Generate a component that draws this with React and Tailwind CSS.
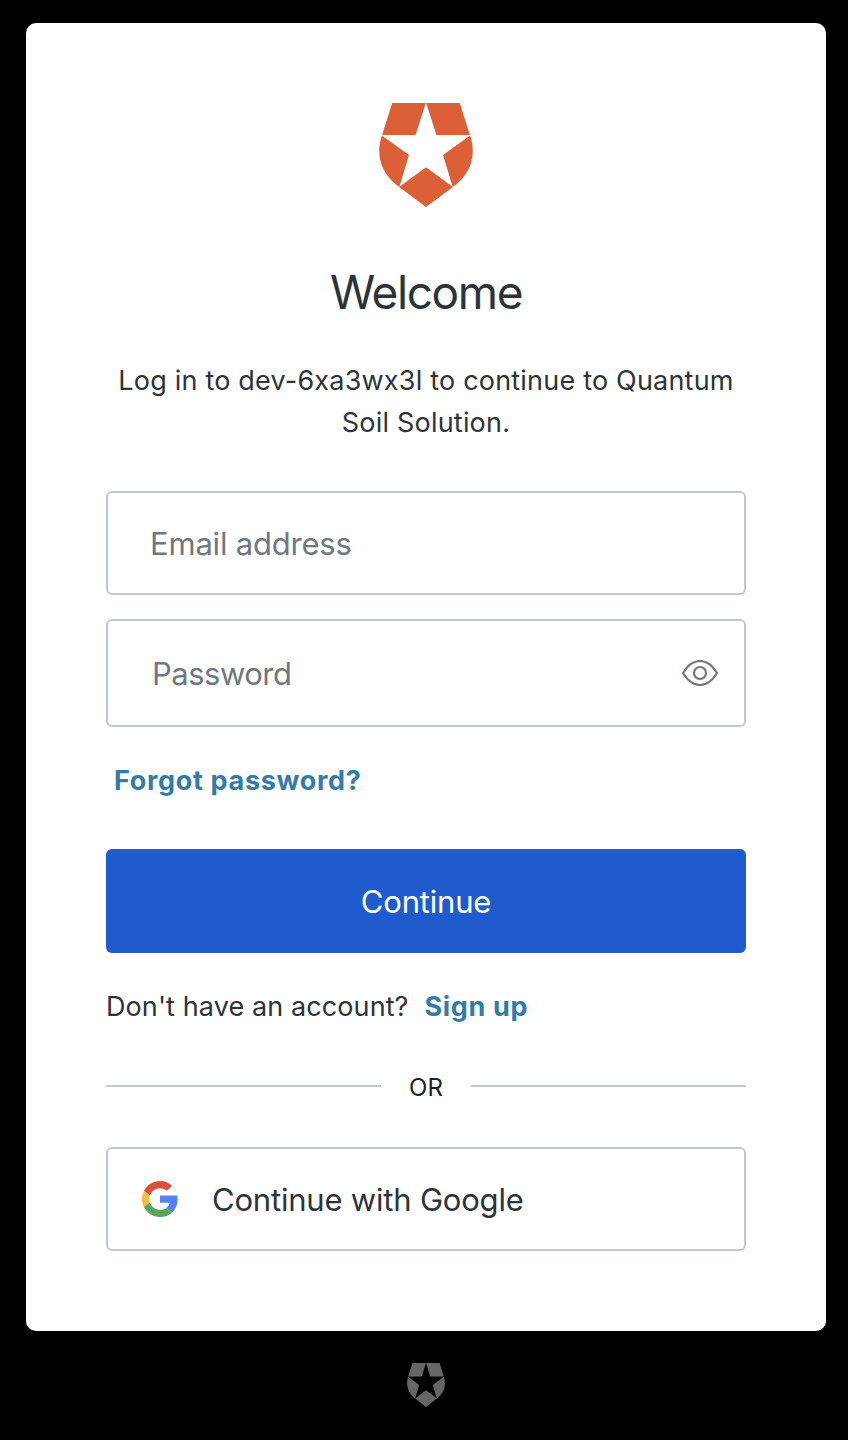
function Shield({ className }) {
  return (
    <svg viewBox="0 0 94 104" preserveAspectRatio="none" className={className} fill="currentColor" aria-hidden="true">
      <path d="M13.2 0H46.8L36.6 32.1H3.1Z" />
      <path d="M47.2 0H80.8L90.9 32.1H57.4Z" />
      <path d="M2.8 32.6L30 52L20.3 84C4.500 73-4.500 55 2.8 32.6Z" />
      <path d="M91.2 32.6L64 52L73.7 84C89.500 73 98.500 55 91.2 32.6Z" />
      <path d="M47 64.200L73.900 83.900L47 104L20.100 83.900Z" />
    </svg>
  );
}

function Eye() {
  return (
    <svg viewBox="0 0 36 26" className="h-[26px] w-9" fill="none" stroke="#6f7780" strokeWidth="2.2" strokeLinejoin="round" aria-hidden="true">
      <path d="M1 13C5.5 5.500 11.500 1 18 1S30.500 5.500 35 13C30.500 20.500 24.500 25 18 25S5.500 20.500 1 13Z" />
      <circle cx="18" cy="13" r="6" />
    </svg>
  );
}

function Google() {
  return (
    <svg viewBox="0 0 48 48" className="h-9 w-9" aria-hidden="true">
      <path fill="#d95040" d="M24 9.500c3.540 0 6.710 1.220 9.210 3.600l6.850-6.850C35.900 2.380 30.470 0 24 0 14.620 0 6.510 5.380 2.560 13.220l7.980 6.190C12.430 13.720 17.740 9.500 24 9.500z" />
      <path fill="#5383ec" d="M47.500 24.550c0-1.900-.15-3.400-.4-5.200H24v9.670h12.940c-.58 2.960-2.260 5.480-4.780 7.180l7.730 6c4.510-4.180 7.610-10.360 7.610-17.650z" />
      <path fill="#f2bd42" d="M10.530 28.590c-.48-1.450-.76-2.990-.76-4.590s.27-3.140.76-4.590l-7.980-6.190C.92 16.460 0 20.120 0 24c0 3.880.92 7.540 2.560 10.780l7.970-6.190z" />
      <path fill="#58a55c" d="M24 48c6.480 0 11.930-2.130 15.890-5.810l-7.730-6c-2.150 1.450-4.920 2.300-8.160 2.300-6.260 0-11.570-4.220-13.470-9.910l-7.980 6.190C6.510 42.620 14.620 48 24 48z" />
    </svg>
  );
}

export default function App() {
  return (
    <div className="flex h-[1440px] w-[848px] flex-col items-center bg-black pt-[23px] pl-1 font-['Inter','Liberation_Sans',sans-serif] text-[#2d333a]">
      <main className="flex h-[1308px] w-[800px] flex-col rounded-[10px] bg-white px-20 pt-20">
        <Shield className="h-[104px] w-[94px] self-center text-[#dc5f38]" />
        <h1 className="mt-[57px] text-center text-[46px] leading-[56px] tracking-[-1.4px]">Welcome</h1>
        <p className="mt-10 text-center text-[27px] leading-[42px] tracking-[0.2px]">
          Log in to dev-6xa3wx3l to continue to Quantum
          <br />
          Soil Solution.
        </p>

        <form className="mt-[47px] flex flex-col">
          <input
            type="text"
            placeholder="Email address"
            className="h-[104px] rounded-md border-2 border-[#c2c8d0] px-[42px] text-[31px] tracking-[-0.2px] placeholder:text-[#6f7780]"
          />
          <div className="mt-6 flex h-[108px] items-center rounded-md border-2 border-[#c2c8d0] pr-[26px] pl-[44px]">
            <input
              type="password"
              placeholder="Password"
              className="h-full min-w-0 flex-1 text-[31px] tracking-[-0.5px] placeholder:text-[#6f7780]"
            />
            <Eye />
          </div>
          <a href="#" className="mt-[33px] ml-2 self-start text-[27px] leading-[42px] font-bold tracking-[0.68px] text-[#337ba9]">
            Forgot password?
          </a>
          <button type="button" className="mt-[47px] h-[104px] rounded-md bg-[#205bcd] pt-[2px] text-[31px] tracking-[-0.2px] text-white">
            Continue
          </button>
        </form>

        <p className="mt-[33px] flex text-[27px] leading-[42px]">
          <span className="tracking-[0.1px]">Don't have an account?</span>
          <a href="#" className="ml-4 font-bold tracking-[0.65px] text-[#337ba9]">Sign up</a>
        </p>

        <div className="mt-10 flex h-[36px] items-center">
          <span className="h-[2px] flex-1 bg-[#c2c8d0]" />
          <span className="w-[90px] pt-[4px] text-center text-[24px] leading-[36px] text-[#1e212a]">OR</span>
          <span className="h-[2px] flex-1 bg-[#c2c8d0]" />
        </div>

        <button type="button" className="mt-[43px] flex h-[104px] items-center rounded-md border-2 border-[#c2c8d0] pl-[34px] text-[31px] tracking-[-0.2px]">
          <Google />
          <span className="ml-[34px] pt-[2px]">Continue with Google</span>
        </button>
      </main>
      <Shield className="mt-8 h-11 w-[38px] text-[#666666]" />
    </div>
  );
}
